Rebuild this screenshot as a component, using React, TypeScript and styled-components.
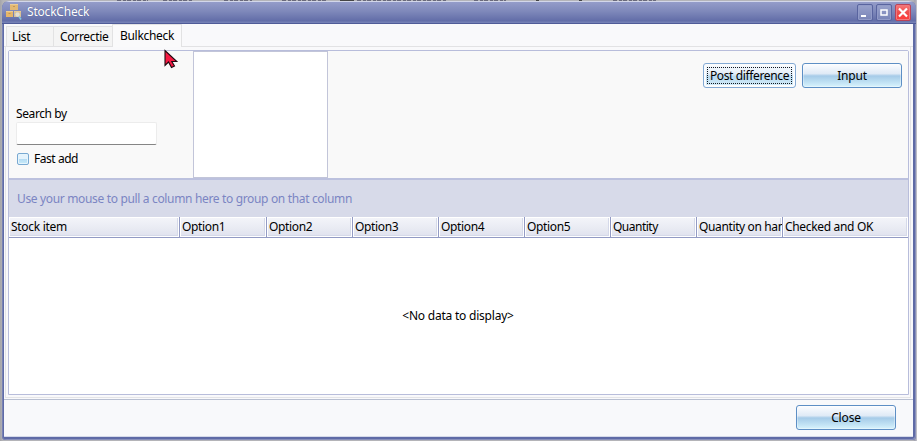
import React from "react";
import styled, { createGlobalStyle } from "styled-components";

const Global = createGlobalStyle`
  * { box-sizing: border-box; }
  html, body { margin: 0; padding: 0; overflow: hidden; }
  body { font: 12px/16px "Noto Sans", "Open Sans", sans-serif; color: #000; }
`;

const Desktop = styled.div`
  width: 917px;
  height: 441px;
  padding: 1px 2px 1px 2px;
  background: linear-gradient(90deg, #a5a5aa 0, #b4b4b8 3px, #b4b4b8 913px, #a2a2b0 915px, #c6c6cc 917px);
  position: relative;
`;
const Backdrop = styled.svg`
  position: absolute;
  left: 0;
  top: 0;
`;
const Window = styled.div`
  position: relative;
  height: 439px;
  width: 914px;
  display: flex;
  flex-direction: column;
  padding: 0 3px 3px 2px;
  border-radius: 7px 7px 4px 4px;
  background: #5f6ba6;
  box-shadow: inset 1px 0 #7882b5, inset -1px -1px #8991bc;
  overflow: hidden;
`;
const TitleBar = styled.header`
  height: 23px;
  flex: none;
  margin: 0 -3px 0 -2px;
  padding: 0 5px 0 4px;
  display: flex;
  border-top: 1px solid #d3d7ea;
  border-bottom: 1px solid #4f5b98;
  background: linear-gradient(#949cc9, #7e88ba 45%, #626da8 90%, #7480b5 96%);
`;
const Title = styled.h1`
  flex: 1;
  margin: 0 0 0 4px;
  font-size: 12px;
  line-height: 20px;
  font-weight: 400;
  letter-spacing: -0.2px;
  color: #fff;
  text-shadow: 0 0 1px #444e84;
`;
const AppIcon = styled.svg`
  flex: none;
  margin-top: 1px;
`;
const Controls = styled.div`
  display: flex;
  gap: 3px;
  padding-top: 2px;
`;
const Control = styled.button<{ $danger?: boolean }>`
  width: 16px;
  height: 17px;
  padding: 0;
  border: 1px solid ${(p) => (p.$danger ? "#b94258" : "#59649f")};
  border-radius: 2px;
  background: ${(p) => (p.$danger ? "linear-gradient(#f77a7a, #ef4c4c 50%, #ff3c3a)" : "linear-gradient(#99a2cc, #7984b7)")};
  box-shadow: inset 0 0 0 1px ${(p) => (p.$danger ? "#ef787d" : "#929bc8")};
  svg { display: block; }
`;
const Client = styled.main`
  flex: 1;
  display: flex;
  flex-direction: column;
  background: #f9f9fb;
`;
const Tabs = styled.nav`
  display: flex;
  align-items: flex-end;
  height: 23px;
  flex: none;
  padding-left: 2px;
  border-bottom: 1px solid #e2e2e4;
`;
const Tab = styled.button<{ $width: number; $indent: number; $active?: boolean }>`
  width: ${(p) => p.$width}px;
  height: ${(p) => (p.$active ? 23 : 20)}px;
  margin-bottom: ${(p) => (p.$active ? -1 : 0)}px;
  padding: 0 0 ${(p) => (p.$active ? 1 : 0)}px ${(p) => p.$indent}px;
  font: inherit;
  letter-spacing: -0.3px;
  text-align: left;
  white-space: nowrap;
  color: #000;
  background: ${(p) => (p.$active ? "#fafafb" : "#f4f4f4")};
  border: 1px solid #e2e2e3;
  border-width: ${(p) => (p.$active ? "1px 1px 0 1px" : "1px 0 0 1px")};
`;
const Page = styled.section`
  flex: 1;
  display: flex;
  flex-direction: column;
  margin: 0 2px 0 1px;
  padding: 3px 1px 2px 2px;
  border: 1px solid #e4e4e7;
  border-top: 0;
`;
const Frame = styled.div`
  flex: 1;
  display: flex;
  flex-direction: column;
  border: 1px solid #b8bddb;
  border-radius: 2px 2px 0 0;
`;
const Tools = styled.div`
  display: flex;
  height: 127px;
  background: #f9f9f9;
`;
const SearchArea = styled.div`
  width: 184px;
  padding: 55px 0 0 7px;
`;
const FieldLabel = styled.label`
  display: block;
  height: 16px;
  letter-spacing: -0.4px;
`;
const Field = styled.input`
  display: block;
  width: 141px;
  height: 23px;
  border: 1px solid #ececec;
  border-bottom-color: #858585;
  border-radius: 2px;
  background: #fff;
`;
const CheckRow = styled.label`
  display: flex;
  align-items: center;
  gap: 5px;
  margin: 6px 0 0 1px;
  letter-spacing: -0.45px;
`;
const Check = styled.span`
  width: 12px;
  height: 12px;
  border: 1px solid #79a9d2;
  border-radius: 2px;
  box-shadow: inset 0 0 0 1px #e7f5fc;
  background: linear-gradient(#e5f3fc 45%, #b5dbf3 50%, #c8ecfa);
`;
const Preview = styled.div`
  width: 135px;
  height: 127px;
  border: 1px solid #c2c5d9;
  background: #fff;
`;
const Actions = styled.div`
  flex: 1;
  display: flex;
  justify-content: flex-end;
  gap: 6px;
  padding: 12px 6px 0 0;
`;
const Button = styled.button<{ $width: number; $focused?: boolean; $spacing?: number }>`
  width: ${(p) => p.$width}px;
  height: 25px;
  padding: ${(p) => (p.$focused ? "3px" : "0")};
  border: 1px solid ${(p) => (p.$focused ? "#83a9d3" : "#5d8fc5")};
  border-radius: 3px;
  background: ${(p) =>
    p.$focused
      ? "linear-gradient(#f8fbfe, #e4eef8 42%, #b9d9ef 55%, #d5eefa)"
      : "linear-gradient(#fcfdff, #dfeaf6 42%, #a5cbe8 52%, #c1e2f4 80%, #d8f4fd)"};
  box-shadow: inset 0 0 0 ${(p) => (p.$focused ? "2px #fafcfe" : "1px rgba(255,255,255,.35)")};
  font: inherit;
  line-height: 22px;
  letter-spacing: ${(p) => p.$spacing ?? 0}px;
  white-space: nowrap;
  color: #000;
`;
const FocusRing = styled.span`
  display: block;
  height: 17px;
  line-height: 16px;
  border: 1px dotted #101820;
`;
const GroupBar = styled.div`
  height: 39px;
  padding: 11px 0 0 8px;
  border-top: 2px solid #bcc1de;
  background: #d7dae9;
  color: #7b85c3;
  letter-spacing: -0.34px;
`;
const HeaderRow = styled.div`
  display: grid;
  grid-template-columns: 171px 87px 86px 86px 86px 86px 86px 86px 1fr;
  height: 21px;
  border-bottom: 1px solid #929ac4;
`;
const HeaderCell = styled.div<{ $spacing: number }>`
  padding-left: 2px;
  line-height: 19px;
  white-space: nowrap;
  overflow: hidden;
  letter-spacing: ${(p) => p.$spacing}px;
  border-right: 1px solid #929ac4;
  background: linear-gradient(#f4f5fa, #e9ebf3 55%, #dfe1ee);
  box-shadow: inset 1px 1px #fff, inset -1px -1px #fff, inset -2px -2px #d5d9e9;
  &:nth-child(8) { border-right-width: 2px; border-right-color: #929ac4; border-right-width: 1px; }
  &:last-child { border-right: 0; }
`;
const Empty = styled.div`
  flex: 1;
  display: flex;
  align-items: center;
  justify-content: center;
  padding-right: 1px;
  background: #fff;
  letter-spacing: -0.22px;
`;
const Footer = styled.footer`
  display: flex;
  justify-content: flex-end;
  height: 38px;
  margin-top: 1px;
  padding: 5px 17px 0 0;
  border-top: 1px solid #b8bfd1;
  border-bottom: 1px solid #d5dae9;
  background: #f8f9fb;
`;
const Pointer = styled.svg`
  position: absolute;
  left: 164px;
  top: 49px;
`;

const columns: [string, number][] = [
  ["Stock item", -0.3], ["Option1", -0.35], ["Option2", -0.35],
  ["Option3", -0.35], ["Option4", -0.35], ["Option5", -0.35],
  ["Quantity", -0.5], ["Quantity on hand", -0.37], ["Checked and OK", -0.33],
];

const BoxesIcon = () => (
  <AppIcon width="17" height="18" viewBox="0 0 17 18">
    <path d="M4 1h8v6H4z" fill="#e2b873" />
    <path d="M0 8h7v6H0z" fill="#e5b66a" />
    <path d="M8 8h7v6H8z" fill="#d8c096" />
    <path d="M4 1.5h8M0 8.5h7M8 8.5h7" fill="none" stroke="#edcc91" />
    <path d="M7 3.5h2M2.5 10.5h2" stroke="#c39653" />
    <circle cx="11.5" cy="11.5" r="2.2" fill="#e2e1da" opacity=".9" />
    <path d="M13 13.5l2 3" stroke="#86c5df" strokeWidth="1.5" />
  </AppIcon>
);

export default function App() {
  return (
    <>
      <Global />
      <Desktop>
        <Backdrop width="917" height="441">
          <path d="M117 .5h31M163 .5h30M224 .5h28M282 .5h46M357 .5h90M474 .5h32M613 .5h43" stroke="#69697b" strokeDasharray="4 2 3 1" />
          <path d="M340 .5h14M536 .5h3M579 .5h3" stroke="#444" />
        </Backdrop>
        <Window>
          <TitleBar>
            <BoxesIcon />
            <Title>StockCheck</Title>
            <Controls>
              <Control aria-label="Minimize"><svg width="14" height="15"><path d="M3 11h5" stroke="#fff" strokeWidth="2" /></svg></Control>
              <Control aria-label="Maximize"><svg width="14" height="15"><path d="M4 5h6v5H4z" fill="none" stroke="#fff" strokeWidth="1.5" /></svg></Control>
              <Control $danger aria-label="Close window"><svg width="14" height="15"><path d="M3 3.5l8 8M11 3.5l-8 8" stroke="#fff" strokeWidth="2.2" /></svg></Control>
            </Controls>
          </TitleBar>
          <Client>
            <Tabs>
              <Tab $width={47} $indent={5}>List</Tab>
              <Tab $width={59} $indent={6}>Correctie</Tab>
              <Tab $width={70} $indent={7} $active>Bulkcheck</Tab>
            </Tabs>
            <Page>
              <Frame>
                <Tools>
                  <SearchArea>
                    <FieldLabel htmlFor="search">Search by</FieldLabel>
                    <Field id="search" />
                    <CheckRow><Check />Fast add</CheckRow>
                  </SearchArea>
                  <Preview />
                  <Actions>
                    <Button $width={93} $focused $spacing={-0.37}><FocusRing>Post difference</FocusRing></Button>
                    <Button $width={100} $spacing={-0.2}>Input</Button>
                  </Actions>
                </Tools>
                <GroupBar>Use your mouse to pull a column here to group on that column</GroupBar>
                <HeaderRow>
                  {columns.map(([name, spacing]) => <HeaderCell key={name} $spacing={spacing}>{name}</HeaderCell>)}
                </HeaderRow>
                <Empty>&lt;No data to display&gt;</Empty>
              </Frame>
            </Page>
            <Footer><Button $width={100} $spacing={-0.15}>Close</Button></Footer>
          </Client>
        </Window>
        <Pointer width="15" height="21" viewBox="0 0 15 21">
          <path d="M1 1.5v15l3.5-3.5 3 5.5 3-1.5-2.7-4.5h5z" fill="#f51943" stroke="#1c0a10" strokeWidth="1.1" />
        </Pointer>
      </Desktop>
    </>
  );
}
